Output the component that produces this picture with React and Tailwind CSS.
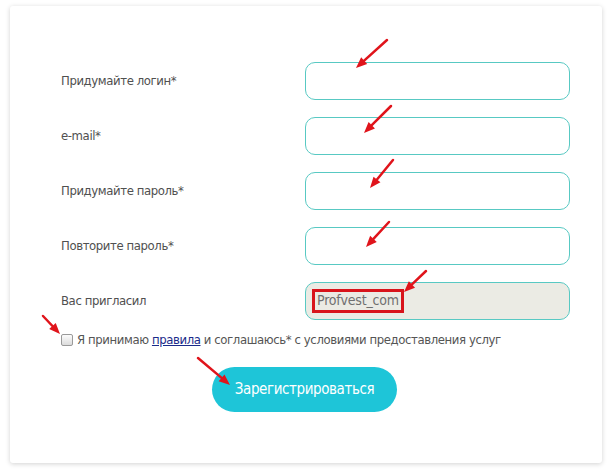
import React from 'react';

const fields = [
  { label: 'Придумайте логин*' },
  { label: 'e-mail*' },
  { label: 'Придумайте пароль*' },
  { label: 'Повторите пароль*' },
  { label: 'Вас пригласил', value: 'Profvest_com', disabled: true },
];

// annotation arrows: [x1, y1, x2(tip), y2(tip)]
const arrows = [
  [387, 40, 356, 68],
  [391, 106, 364, 133],
  [393, 160, 370, 188],
  [389, 222, 366, 247],
  [426, 271, 404, 292],
  [43, 316, 60, 334],
  [198, 358, 230, 385],
];

function Arrow({ a }) {
  const [x1, y1, x2, y2] = a;
  const ang = Math.atan2(y2 - y1, x2 - x1);
  const len = 11;
  const w = 4.5;
  const bx = x2 - Math.cos(ang) * len;
  const by = y2 - Math.sin(ang) * len;
  const px = -Math.sin(ang) * w;
  const py = Math.cos(ang) * w;
  return (
    <g>
      <line x1={x1} y1={y1} x2={bx} y2={by} stroke="#e0141b" strokeWidth="2.5" strokeLinecap="round" />
      <polygon points={`${x2},${y2} ${bx + px},${by + py} ${bx - px},${by - py}`} fill="#e0141b" />
    </g>
  );
}

export default function App() {
  const font = { fontFamily: '"Liberation Sans Narrow", "DejaVu Sans Condensed", "Liberation Sans", sans-serif' };
  return (
    <div className="relative w-[613px] h-[474px] bg-white overflow-hidden" style={font}>
      <div className="absolute left-[10px] top-[6px] w-[592px] h-[457px] bg-white rounded-[3px] shadow-[0_1px_5px_rgba(0,0,0,0.18)]" />
      <div className="relative pt-[62px] pl-[61px]">
        <div className="flex flex-col gap-[17px]">
          {fields.map((f) => (
            <div key={f.label} className="flex items-center h-[38px]">
              <span className="w-[244px] text-[13px] text-[#505050] tracking-[-0.4px]">{f.label}</span>
              <div
                className={`w-[265px] h-[38px] rounded-[10px] border border-[#58c9c3] flex items-center pl-[6px] ${f.disabled ? 'bg-[#ebebe4]' : 'bg-white'}`}
              >
                {f.value && (
                  <span className="text-[14px] text-[#707070] tracking-[-0.2px] border-[3px] border-[#d8141b] px-[2px] leading-[16px] h-[24px] flex items-start">
                    {f.value}
                  </span>
                )}
              </div>
            </div>
          ))}
        </div>
        <div className="flex items-center mt-[13px] h-[14px]">
          <span className="w-[12px] h-[12px] border border-[#9a9a9a] rounded-[2px] bg-gradient-to-b from-[#fcfcfc] to-[#dcdcdc]" />
          <span className="ml-[4px] text-[13px] tracking-[-0.4px] text-[#555]">
            Я принимаю <span className="text-[#1a2a8a] underline">правила</span> и соглашаюсь* с условиями предоставления услуг
          </span>
        </div>
        <div className="mt-[20px] pl-[151px]">
          <button className="w-[185px] h-[45px] rounded-full bg-[#1ec5d8] text-white text-[15px] tracking-[-0.4px] font-normal">
            Зарегистрироваться
          </button>
        </div>
      </div>
      <svg className="absolute left-0 top-0 pointer-events-none" width="613" height="474">
        {arrows.map((a, i) => (
          <Arrow key={i} a={a} />
        ))}
      </svg>
    </div>
  );
}
